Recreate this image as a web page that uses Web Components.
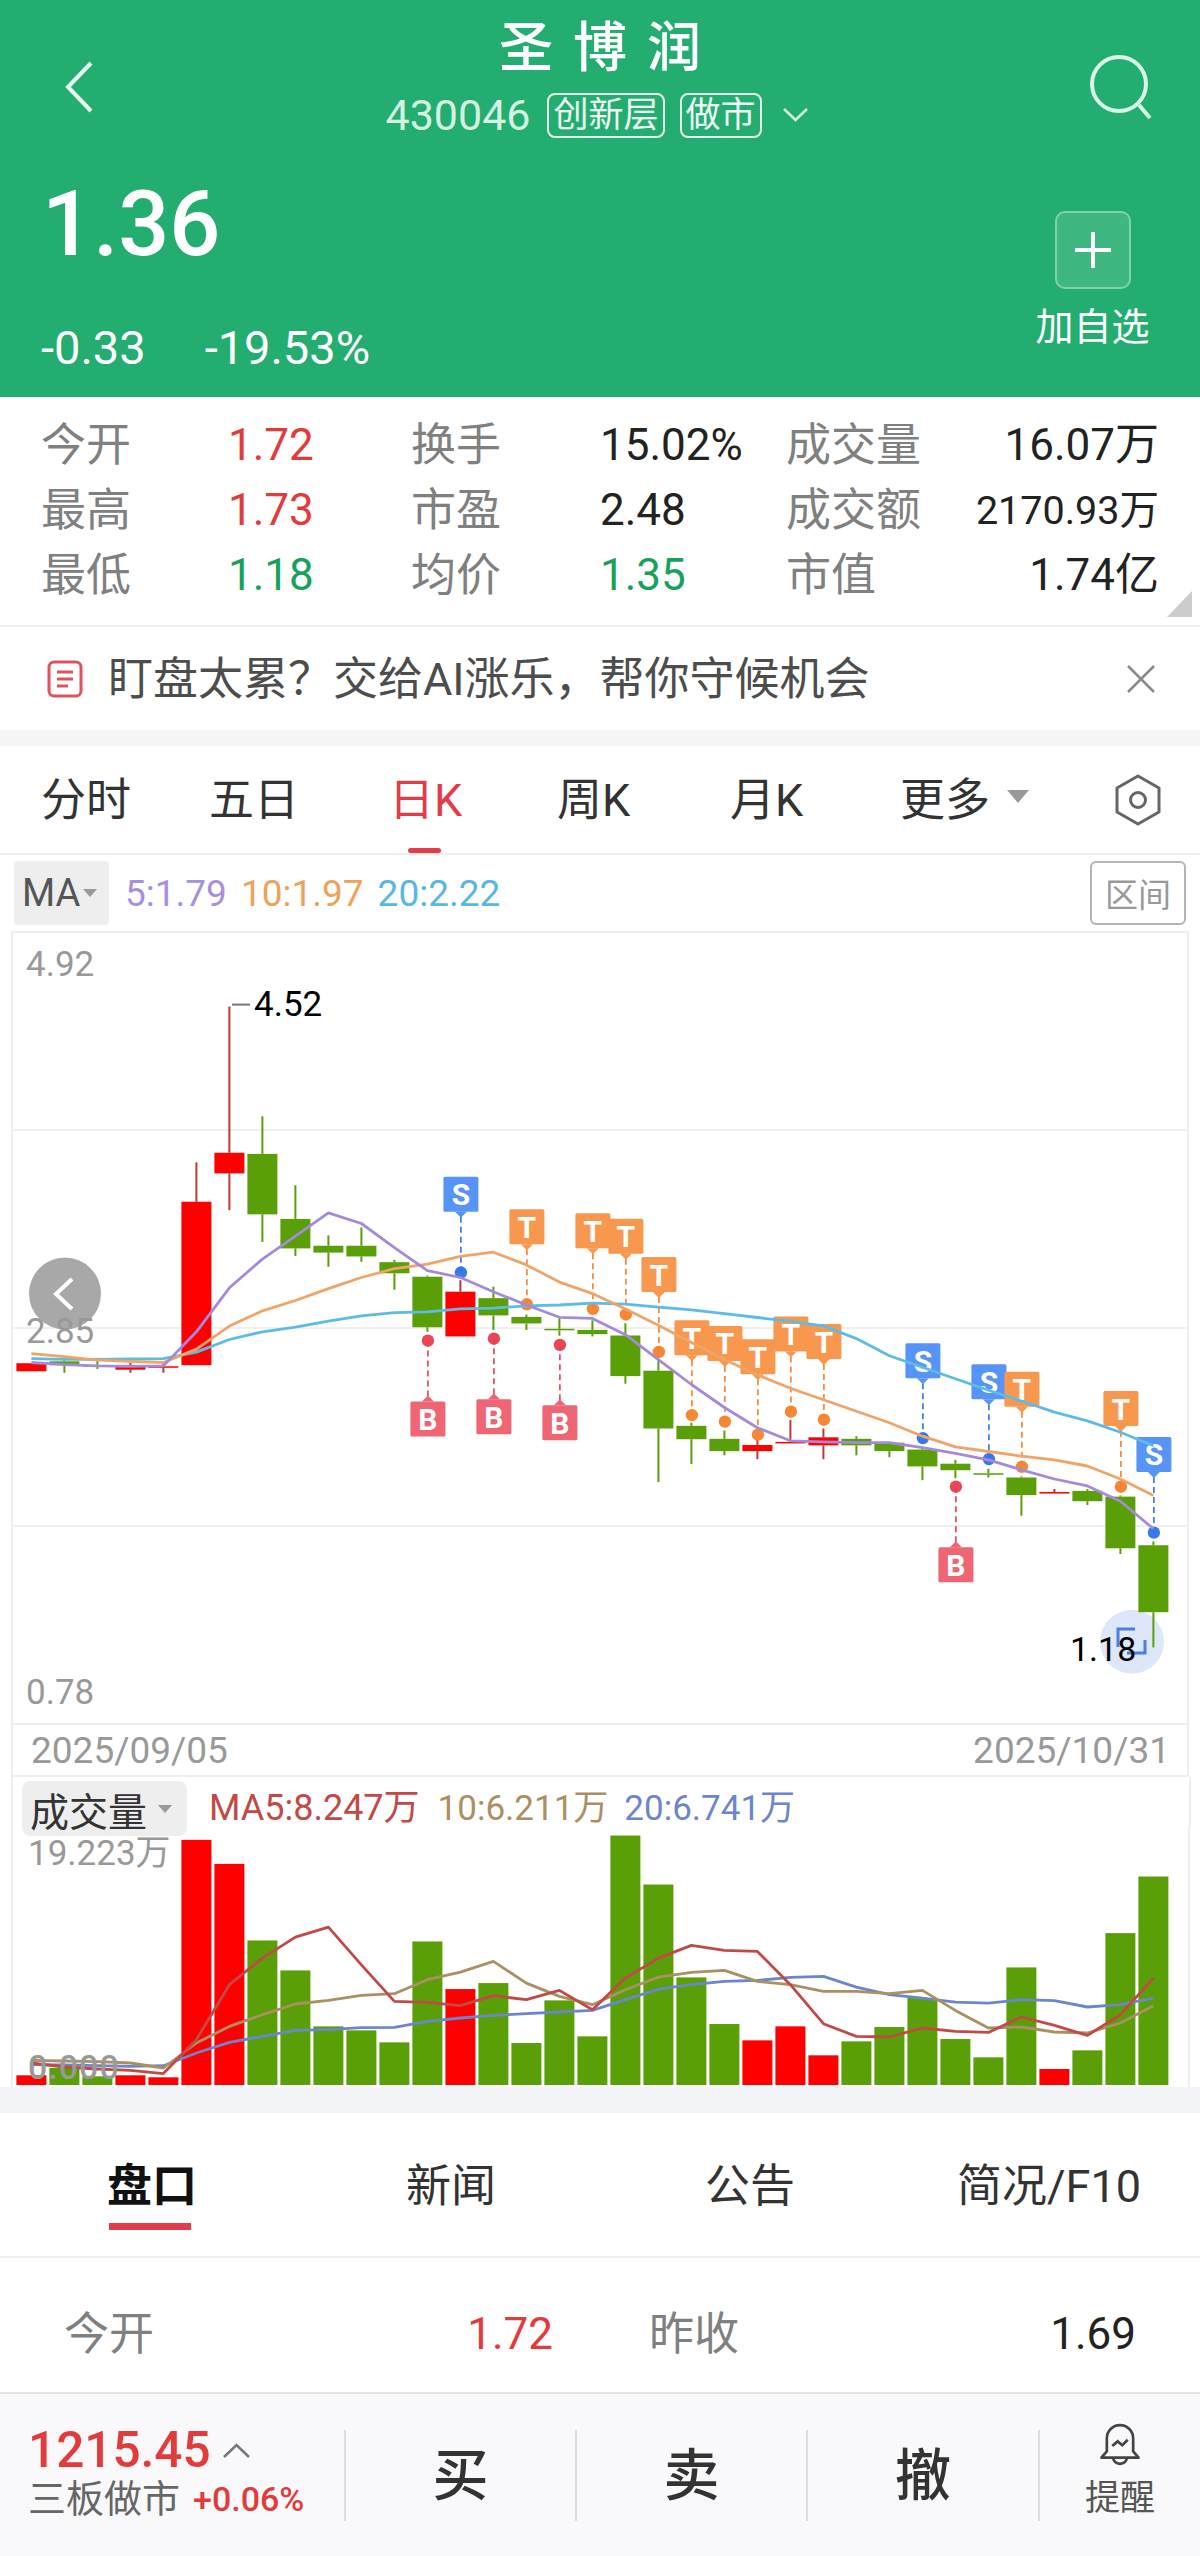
<!DOCTYPE html>
<html lang="zh">
<head>
<meta charset="utf-8">
<title>圣博润</title>
<style>
  html, body { margin: 0; background: #fff; }
  body { width: 1200px; height: 2556px; overflow: hidden; font-family: Roboto, "Noto Sans CJK SC", sans-serif; }
</style>
</head>
<body>
<stock-header></stock-header>
<stock-stats>
  <stat-item label="今开" value="1.72" tone="up"></stat-item>
  <stat-item label="换手" value="15.02%"></stat-item>
  <stat-item label="成交量" value="16.07万" end></stat-item>
  <stat-item label="最高" value="1.73" tone="up"></stat-item>
  <stat-item label="市盈" value="2.48"></stat-item>
  <stat-item label="成交额" value="2170.93万" end small></stat-item>
  <stat-item label="最低" value="1.18" tone="down"></stat-item>
  <stat-item label="均价" value="1.35" tone="down"></stat-item>
  <stat-item label="市值" value="1.74亿" end></stat-item>
</stock-stats>
<promo-bar>盯盘太累？交给AI涨乐，帮你守候机会</promo-bar>
<period-tabs></period-tabs>
<ma-legend></ma-legend>
<kline-chart></kline-chart>
<date-axis></date-axis>
<volume-chart></volume-chart>
<detail-tabs></detail-tabs>
<quote-row>
  <stat-item label="今开" value="1.72" tone="up" spread></stat-item>
  <stat-item label="昨收" value="1.69" spread></stat-item>
</quote-row>
<bottom-bar></bottom-bar>

<script>
// k线数据: 颜色, 实体上, 实体下, 上影, 下影 (前18根和后17根是分开量的)
const y3 = v => 930 + v / 2.613;
const y4 = v => 1130 + v / 2.613;
const cx = i => 31.4 + 33 * i;

const candles = [
  ['r', 1132, 1153], ['g', 1127, 1137, 1120, 1157], ['g', 1137, 1139, 1118, 1147], ['r', 1140, 1149, 1130, 1157],
  ['r', 1140, 1143, 1130, 1157], ['r', 710, 1137, 607], ['r', 582, 636, 200, 732], ['g', 585, 743, 487, 815],
  ['g', 755, 832, 667, 852], ['g', 825, 843, 798, 880], ['g', 825, 853, 777, 867], ['g', 868, 897, 862, 940],
  ['g', 906, 1038, 903, 1050], ['r', 945, 1062, 915], ['g', 962, 1007, 932, 1045], ['g', 1011, 1028, 1005, 1045],
  ['g', 1042, 1046, 1015, 1060], ['g', 1045, 1056, 1020, 1062]
].map(c => [c[0], y3(c[1]), y3(c[2]), c[3] ? y3(c[3]) : 0, c[4] ? y3(c[4]) : 0]).concat([
  ['g', 537, 643, 505, 663], ['g', 629, 780, 600, 920], ['g', 773, 808, 765, 873], ['g', 807, 839, 785, 850],
  ['r', 823, 839, 810, 860], ['r', 815, 819, 758], ['r', 803, 824, 780, 860], ['g', 807, 824, 800, 850],
  ['g', 817, 839, 815, 855], ['g', 835, 879, 830, 915], ['g', 872, 889, 862, 910], ['g', 897, 900, 885, 908],
  ['g', 908, 954, 905, 1008], ['r', 946, 950, 938], ['g', 943, 970, 938, 980], ['g', 958, 1093, 955, 1108],
  ['g', 1085, 1260, 1075, 1352]
].map(c => [c[0], y4(c[1]), y4(c[2]), c[3] ? y4(c[3]) : 0, c[4] ? y4(c[4]) : 0]));

const joinY = (a, b) => a.map(y3).concat(b.map(y4));
const priceMA = {
  '#a58ad9': joinY([1130, 1136, 1139, 1140, 1139, 1050, 935, 860, 800, 739, 767, 830, 890, 908, 945, 980, 1012, 1015],
    [535, 600, 665, 725, 778, 812, 815, 817, 817, 830, 845, 862, 888, 912, 930, 970, 1042]),
  '#f0a468': joinY([1107, 1115, 1124, 1127, 1130, 1095, 1035, 995, 968, 937, 908, 885, 873, 853, 842, 875, 920, 950],
    [468, 510, 555, 600, 640, 675, 705, 735, 765, 800, 828, 840, 852, 862, 878, 912, 955]),
  '#5cbce6': joinY([1120, 1122, 1122, 1121, 1120, 1103, 1070, 1050, 1038, 1022, 1008, 1000, 998, 990, 988, 982, 980, 975],
    [455, 463, 470, 480, 490, 500, 512, 545, 590, 620, 650, 680, 708, 737, 760, 790, 825])
};

// 买卖点: 类型, 第几根, 旗子上沿, 圆点
const marks = [
  ['S', 13, y3(645), y3(895)], ['T', 15, y3(730), y3(978)], ['T', 17, y3(740), y3(990)],
  ['B', 12, y3(1232), y3(1073)], ['B', 14, y3(1226), y3(1068)], ['B', 16, y3(1242), y3(1084)],
  ['T', 18, y4(232), y4(482)], ['T', 19, y4(332), y4(580)], ['T', 20, y4(497), y4(745)],
  ['T', 21, y4(512), y4(762)], ['T', 23, y4(487), y4(736)], ['T', 24, y4(507), y4(757)],
  ['T', 22, y4(547), y4(796)], ['S', 27, y4(557), y4(805)], ['S', 29, y4(612), y4(860)],
  ['T', 30, y4(632), y4(880)], ['B', 28, y4(1090), y4(932)], ['T', 33, y4(682), y4(932)],
  ['S', 34, y4(802), y4(1052)]
];
const markColor = {
  S: ['#5794f7', '#2e72e8'],
  T: ['#f8984e', '#f5822a'],
  B: ['#ee6673', '#e63e4d']
};

const y5 = v => 1720 + v / 3.003;
const volumes = [
  ['r', 1067], ['g', 1045], ['g', 1070], ['r', 1067], ['r', 1073], ['r', 360], ['r', 432], ['g', 662], ['g', 752],
  ['g', 920], ['g', 932], ['g', 968], ['g', 665], ['r', 808], ['g', 790], ['g', 970], ['g', 842], ['g', 950],
  ['g', 347], ['g', 494], ['g', 773], ['g', 913], ['r', 962], ['r', 920], ['r', 1007], ['g', 965], ['g', 922],
  ['g', 835], ['g', 958], ['g', 1013], ['g', 743], ['r', 1048], ['g', 992], ['g', 640], ['g', 470]
];
const volumeMA = {
  '#6b86cc': [1035, 1036, 1038, 1040, 1038, 1000, 968, 950, 932, 930, 924, 923, 905, 895, 887, 882, 877, 872,
    840, 808, 795, 785, 782, 773, 770, 802, 825, 835, 847, 850, 840, 843, 862, 855, 835],
  '#ab9063': [1022, 1024, 1026, 1030, 1045, 970, 920, 885, 853, 842, 827, 822, 780, 757, 725, 790, 830, 855,
    810, 772, 758, 752, 785, 795, 815, 815, 822, 812, 872, 925, 922, 937, 940, 910, 858],
  '#c14a47': [1030, 1042, 1048, 1052, 1062, 960, 795, 715, 652, 622, 735, 845, 848, 858, 828, 840, 812, 870,
    775, 715, 677, 692, 695, 795, 912, 950, 952, 925, 935, 938, 892, 917, 947, 885, 775]
};

const FILL = { r: '#ff0000', g: '#5a9e08' };
const WICK = { r: '#b93a3a', g: '#5a9e08' };

function polyline(ys, color, width) {
  const pts = ys.map((y, i) => cx(i).toFixed(1) + ',' + y.toFixed(1)).join(' ');
  return `<polyline points="${pts}" fill="none" stroke="${color}" stroke-width="${width}" stroke-linejoin="round"/>`;
}

class StockHeader extends HTMLElement {
  constructor() {
    super();
    this.attachShadow({ mode: 'open' });
    this.shadowRoot.innerHTML = `
      <style>
        :host { display: block; height: 397px; background: #24ad70; color: #fff; overflow: hidden; }
        .top { display: grid; grid-template-columns: 1fr auto 1fr; padding-top: 18px; }
        .back { margin: 43px 0 0 65px; display: block; }
        .search { margin: 37px 45px 0 auto; display: block; }
        .mid { display: flex; flex-direction: column; align-items: center; }
        h1 { margin: 0; padding-left: 20px; font-size: 54px; line-height: 62px; letter-spacing: 20px; font-weight: 500; }
        .code { display: flex; align-items: center; height: 46px; margin: 12px 7px 0 0; color: #d3f2e2; }
        .num { font-size: 43px; margin-right: 17px; }
        .tag { font-size: 35px; line-height: 41px; padding: 0 4px; border: 2px solid #e6f7ee; border-radius: 8px; margin-right: 15px; color: #eefaf4; }
        .code svg { margin-left: 6px; }
        .bottom { display: flex; justify-content: space-between; margin-top: 41px; }
        .price { margin-left: 42px; font-size: 90px; line-height: 92px; font-weight: 500; }
        .chg { display: flex; gap: 59px; margin: 54px 0 0 41px; font-size: 47px; line-height: 46px; }
        .add { width: 115px; margin: 32px 50px 0 0; display: flex; flex-direction: column; align-items: center; }
        .plus { width: 76px; height: 78px; box-sizing: border-box; border: 2px solid rgba(255,255,255,.35); border-radius: 10px; background: rgba(255,255,255,.12); display: flex; align-items: center; justify-content: center; }
        .lbl { margin-top: 16px; font-size: 38px; line-height: 44px; white-space: nowrap; }
      </style>
      <div class="top">
        <svg class="back" width="28" height="52" viewBox="0 0 28 52"><polyline points="26,2 3,26 26,50" fill="none" stroke="#eafaf2" stroke-width="4"/></svg>
        <div class="mid">
          <h1>圣博润</h1>
          <div class="code">
            <span class="num">430046</span>
            <span class="tag">创新层</span>
            <span class="tag">做市</span>
            <svg width="25" height="14" viewBox="0 0 25 14"><polyline points="1,1 12.5,12 24,1" fill="none" stroke="#d3f2e2" stroke-width="2.5"/></svg>
          </div>
        </div>
        <svg class="search" width="66" height="66" viewBox="0 0 66 66"><circle cx="30" cy="29" r="27" fill="none" stroke="#d9f5e7" stroke-width="4"/><line x1="50" y1="50" x2="61" y2="63" stroke="#d9f5e7" stroke-width="4"/></svg>
      </div>
      <div class="bottom">
        <div>
          <div class="price">1.36</div>
          <div class="chg"><span>-0.33</span><span>-19.53%</span></div>
        </div>
        <div class="add">
          <div class="plus"><svg width="42" height="42" viewBox="0 0 42 42"><path d="M21 3V39M3 21H39" stroke="#fff" stroke-width="4"/></svg></div>
          <div class="lbl">加自选</div>
        </div>
      </div>`;
  }
}

class StatItem extends HTMLElement {
  constructor() {
    super();
    this.attachShadow({ mode: 'open' });
  }
  connectedCallback() {
    this.shadowRoot.innerHTML = `
      <style>
        :host { display: contents; }
        :host([spread]) { display: flex; justify-content: space-between; align-items: center; }
        .k { color: #808080; font-size: 45px; line-height: 65px; }
        .v { color: #222; font-size: 44px; line-height: 65px; }
        :host([tone=up]) .v { color: #e23b3b; }
        :host([tone=down]) .v { color: #17a25c; }
        :host([end]) .v { text-align: right; }
        :host([small]) .v { font-size: 39.5px; }
      </style>
      <span class="k">${this.getAttribute('label')}</span>
      <span class="v">${this.getAttribute('value')}</span>`;
  }
}

class StockStats extends HTMLElement {
  constructor() {
    super();
    this.attachShadow({ mode: 'open' });
    this.shadowRoot.innerHTML = `
      <style>
        :host { display: block; height: 228px; border-bottom: 2px solid #f0f0f0; position: relative; }
        .grid { display: grid; grid-template-columns: 187px 183px 189px 186px 135px 238px; padding: 16px 0 0 41px; }
        .corner { position: absolute; right: 8px; bottom: 8px; width: 0; height: 0; border-left: 25px solid transparent; border-bottom: 26px solid #ccc; }
      </style>
      <div class="grid"><slot></slot></div>
      <div class="corner"></div>`;
  }
}

class PromoBar extends HTMLElement {
  constructor() {
    super();
    this.attachShadow({ mode: 'open' });
    this.shadowRoot.innerHTML = `
      <style>
        :host { display: flex; align-items: center; box-sizing: border-box; height: 119px; padding: 0 44px 0 47px; border-bottom: 16px solid #f5f5f7; color: #4d4d4d; font-size: 45px; }
        .t { margin-left: 25px; flex: 1; white-space: nowrap; position: relative; top: -3px; }
      </style>
      <svg width="36" height="38" viewBox="0 0 36 38"><rect x="2" y="2" width="32" height="34" rx="5" fill="none" stroke="#e0525e" stroke-width="3"/><path d="M10 12H26M10 19H26M10 26H21" stroke="#e0525e" stroke-width="3"/></svg>
      <div class="t"><slot></slot></div>
      <svg width="30" height="30" viewBox="0 0 30 30"><path d="M2 2L28 28M28 2L2 28" stroke="#8a8a8a" stroke-width="2.5"/></svg>`;
  }
}

class PeriodTabs extends HTMLElement {
  constructor() {
    super();
    this.attachShadow({ mode: 'open' });
    this.shadowRoot.innerHTML = `
      <style>
        :host { display: block; box-sizing: border-box; height: 109px; border-bottom: 2px solid #eee; }
        .row { display: grid; grid-template-columns: 168px 180px 168px 173px 170px 215px 46px; padding-left: 41px; height: 107px; align-items: center; font-size: 45px; color: #333; }
        .row > span { position: relative; top: -3px; }
        .row > span.on { top: 0; align-self: stretch; }
        .on { color: #e23b4a; display: flex; align-items: center; }
        .on b { font-weight: 400; position: relative; top: -3px; }
        .on::after { content: ""; position: absolute; left: 19px; bottom: 0; width: 33px; height: 5px; border-radius: 3px; background: #e23b4a; }
        .more { display: flex; align-items: center; gap: 17px; }
        .more i { width: 0; height: 0; border-left: 11px solid transparent; border-right: 11px solid transparent; border-top: 13px solid #999; }
        svg { display: block; }
      </style>
      <div class="row">
        <span>分时</span><span>五日</span><span class="on"><b>日K</b></span><span>周K</span><span>月K</span>
        <span class="more">更多<i></i></span>
        <svg width="46" height="52" viewBox="0 0 46 52"><path d="M23 2L44 14V38L23 50L2 38V14Z" fill="none" stroke="#666" stroke-width="3" stroke-linejoin="round"/><circle cx="23" cy="26" r="7.5" fill="none" stroke="#666" stroke-width="3"/></svg>
      </div>`;
  }
}

class MaLegend extends HTMLElement {
  constructor() {
    super();
    this.attachShadow({ mode: 'open' });
    this.shadowRoot.innerHTML = `
      <style>
        :host { display: flex; align-items: center; height: 76px; padding: 0 14px; box-sizing: border-box; font-size: 37px; }
        .ma { width: 95px; height: 64px; box-sizing: border-box; background: #eee; border-radius: 4px; display: flex; align-items: center; padding-left: 8px; gap: 3px; color: #555; font-size: 38px; margin-right: 16px; }
        .ma i { width: 0; height: 0; border-left: 7px solid transparent; border-right: 7px solid transparent; border-top: 8px solid #999; }
        span { white-space: nowrap; margin-right: 14px; }
        .zone { margin-left: auto; width: 96px; height: 64px; box-sizing: border-box; border: 2px solid #b4b4b4; border-radius: 6px; color: #999; font-size: 33px; display: flex; align-items: center; justify-content: center; }
      </style>
      <div class="ma">MA<i></i></div>
      <span style="color:#a98fe0">5:1.79</span>
      <span style="color:#eea25c">10:1.97</span>
      <span style="color:#57b8e4">20:2.22</span>
      <div class="zone">区间</div>`;
  }
}

class KlineChart extends HTMLElement {
  constructor() {
    super();
    this.attachShadow({ mode: 'open' });
    this.shadowRoot.innerHTML = `
      <style>
        :host { display: block; height: 794px; }
        svg { display: block; }
        text { font-family: Roboto, sans-serif; dominant-baseline: central; }
      </style>
      <svg width="1200" height="794" viewBox="0 931 1200 794">${this.draw()}</svg>`;
  }
  candleSvg() {
    return candles.map((c, i) => {
      const x = cx(i);
      const [col, top, bot, hi, lo] = c;
      let s = '';
      if (hi) s += `<line x1="${x}" x2="${x}" y1="${hi}" y2="${top}" stroke="${WICK[col]}" stroke-width="2"/>`;
      if (lo) s += `<line x1="${x}" x2="${x}" y1="${bot}" y2="${lo}" stroke="${WICK[col]}" stroke-width="2"/>`;
      return s + `<rect x="${x - 15}" y="${top}" width="30" height="${Math.max(bot - top, 1.5)}" fill="${FILL[col]}"/>`;
    }).join('');
  }
  markSvg() {
    let dash = '', flags = '', dots = '';
    for (const [t, i, top, dot] of marks) {
      const x = cx(i) + 0.5;
      const [c, d] = markColor[t];
      const up = t === 'B';
      const y1 = up ? top - 5 : top + 40;
      dash += `<line x1="${x}" x2="${x}" y1="${y1}" y2="${dot}" stroke="${d}" stroke-width="1.6" stroke-dasharray="6 4"/>`;
      const tip = up ? `M${x - 6} ${top}L${x} ${top - 6}L${x + 6} ${top}Z` : `M${x - 6} ${top + 35}L${x} ${top + 41}L${x + 6} ${top + 35}Z`;
      flags += `<rect x="${x - 17.5}" y="${top}" width="35" height="35" rx="1.5" fill="${c}"/><path d="${tip}" fill="${c}"/>`
        + `<text x="${x}" y="${top + 18}" text-anchor="middle" fill="#fff" font-size="30" font-weight="700">${t}</text>`;
      dots += `<circle cx="${x}" cy="${dot}" r="6.2" fill="${d}" fill-opacity=".95"/>`;
    }
    return dash + flags + dots;
  }
  draw() {
    const frame = [1130, 1328, 1526].map(y => `<line x1="11" x2="1189" y1="${y}" y2="${y}" stroke="#f0f0f0" stroke-width="2"/>`).join('');
    const lines = Object.entries(priceMA).reverse().map(([c, ys]) => polyline(ys, c, 2.8)).join('');
    const last = `<circle cx="1132" cy="1641.7" r="32" fill="#dde7f9"/>`;
    const icon = `<path d="M1135 1629H1118V1647" fill="none" stroke="#4a7fe0" stroke-width="3"/><path d="M1127 1653H1145V1640" fill="none" stroke="#4a7fe0" stroke-width="3"/>`;
    return `<rect x="12" y="932" width="1176" height="792" fill="#fff" stroke="#eee" stroke-width="2"/>`
      + frame + last + this.candleSvg() + this.markSvg() + lines + icon
      + `<circle cx="65" cy="1293.6" r="36" fill="#a8a8a8"/>`
      + `<polyline points="72,1279 56,1294 72,1309" fill="none" stroke="#fff" stroke-width="4"/>`
      + `<line x1="232" x2="250" y1="1004.6" y2="1004.6" stroke="#777" stroke-width="2"/>`
      + `<text x="254" y="1004" font-size="35" fill="#000">4.52</text>`
      + `<text x="1070" y="1649" font-size="34" fill="#000">1.18</text>`
      + `<text x="26" y="964" font-size="35" fill="#999">4.92</text>`
      + `<text x="26" y="1331" font-size="35" fill="#999">2.85</text>`
      + `<text x="26" y="1692" font-size="35" fill="#999">0.78</text>`;
  }
}

class DateAxis extends HTMLElement {
  constructor() {
    super();
    this.attachShadow({ mode: 'open' });
    this.shadowRoot.innerHTML = `
      <style>
        :host { display: flex; justify-content: space-between; align-items: center; height: 50px; margin: 0 11px; padding: 0 17px 0 18px; border-left: 2px solid #eee; border-right: 2px solid #eee; border-bottom: 2px solid #eee; color: #999; font-size: 37px; }
      </style>
      <span>2025/09/05</span><span>2025/10/31</span>`;
  }
}

class VolumeChart extends HTMLElement {
  constructor() {
    super();
    this.attachShadow({ mode: 'open' });
    const bars = volumes.map(([c, v], i) => `<rect x="${cx(i) - 15}" y="${y5(v)}" width="30" height="${2085 - y5(v)}" fill="${FILL[c]}"/>`).join('');
    const lines = Object.entries(volumeMA).map(([c, vs]) => polyline(vs.map(y5), c, 2.8)).join('');
    this.shadowRoot.innerHTML = `
      <style>
        :host { display: block; box-sizing: border-box; height: 336px; border-bottom: 26px solid #f3f4f8; }
        .head { display: flex; align-items: flex-start; height: 50px; padding: 4px 0 0 9px; box-sizing: border-box; font-size: 35px; border-left: 2px solid #eee; margin: 0 9px 0 11px; border-right: 2px solid #eee; }
        .chip { width: 165px; height: 55px; flex: none; box-sizing: border-box; background: #eee; border-radius: 8px; display: flex; align-items: center; padding-left: 8px; color: #333; font-size: 39px; margin-right: 22px; white-space: nowrap; }
        .chip i { margin-left: 11px; width: 0; height: 0; border-left: 7px solid transparent; border-right: 7px solid transparent; border-top: 8px solid #999; }
        .head span { line-height: 55px; white-space: nowrap; margin-right: 18px; }
        .head .ma5 { font-size: 36px; }
        .head .ma10 { margin-right: 16px; }
        svg { display: block; }
        text { font-family: Roboto, "Noto Sans CJK SC", sans-serif; dominant-baseline: central; }
      </style>
      <div class="head">
        <div class="chip">成交量<i></i></div>
        <span class="ma5" style="color:#c14a47">MA5:8.247万</span>
        <span class="ma10" style="color:#ab9063">10:6.211万</span>
        <span style="color:#6b86cc">20:6.741万</span>
      </div>
      <svg width="1200" height="260" viewBox="0 1827 1200 260">
        <line x1="12" x2="12" y1="1827" y2="2087" stroke="#eee" stroke-width="2"/>
        <line x1="1189" x2="1189" y1="1827" y2="2087" stroke="#eee" stroke-width="2"/>
        ${bars}${lines}
        <text x="28" y="1853" font-size="35" fill="#999">19.223万</text>
        <text x="28" y="2067" font-size="34" font-weight="500" letter-spacing="1" fill="#999">0.000</text>
      </svg>`;
  }
}

class DetailTabs extends HTMLElement {
  constructor() {
    super();
    this.attachShadow({ mode: 'open' });
    this.shadowRoot.innerHTML = `
      <style>
        :host { display: block; height: 145px; box-sizing: border-box; border-bottom: 2px solid #f0f0f0; }
        .row { display: grid; grid-template-columns: 299px 299px 252px 1fr; padding-left: 107px; padding-top: 47px; font-size: 45px; line-height: 54px; color: #333; }
        .on { color: #111; font-weight: 700; position: relative; }
        .on::after { content: ""; position: absolute; left: 2px; top: 63px; width: 82px; height: 7px; background: #e23b4a; }
      </style>
      <div class="row"><span class="on">盘口</span><span>新闻</span><span>公告</span><span>简况/F10</span></div>`;
  }
}

class QuoteRow extends HTMLElement {
  constructor() {
    super();
    this.attachShadow({ mode: 'open' });
    this.shadowRoot.innerHTML = `
      <style>
        :host { display: block; height: 136px; box-sizing: border-box; border-bottom: 2px solid #e4e4e4; }
        .row { display: grid; grid-template-columns: 489px 487px; column-gap: 96px; padding: 44px 0 0 64px; }
      </style>
      <div class="row"><slot></slot></div>`;
  }
}

class BottomBar extends HTMLElement {
  constructor() {
    super();
    this.attachShadow({ mode: 'open' });
    this.shadowRoot.innerHTML = `
      <style>
        :host { display: flex; height: 162px; background: #f9f9fb; align-items: flex-start; box-sizing: border-box; padding-top: 36px; }
        .idx { width: 344px; box-sizing: border-box; padding-left: 28px; }
        .l1 { display: flex; align-items: center; color: #e23b3b; font-size: 49.5px; line-height: 48px; font-weight: 500; margin-top: -4px; }
        .l1 svg { margin-left: 12px; }
        .l2 { display: flex; align-items: center; margin-top: 0; line-height: 50px; color: #666; font-size: 38px; }
        .l2 b { margin-left: 13px; color: #e23b3b; font-size: 34px; font-weight: 500; }
        .btn { height: 91px; box-sizing: border-box; border-left: 2px solid #ddd; display: flex; align-items: center; justify-content: center; font-size: 56px; font-weight: 500; color: #333; }
        .btn span { position: relative; top: -5px; }
        .bell { flex: 1; height: 91px; border-left: 2px solid #ddd; display: flex; flex-direction: column; align-items: center; color: #555; font-size: 35px; }
        .bell svg { margin-top: -8px; display: block; }
        .bell span { line-height: 44px; margin-top: 7px; }
      </style>
      <div class="idx">
        <div class="l1">1215.45<svg width="27" height="15" viewBox="0 0 27 15"><polyline points="1,14 13.5,2 26,14" fill="none" stroke="#777" stroke-width="2.5"/></svg></div>
        <div class="l2">三板做市<b>+0.06%</b></div>
      </div>
      <div class="btn" style="width:231px"><span>买</span></div>
      <div class="btn" style="width:231px"><span>卖</span></div>
      <div class="btn" style="width:232px"><span>撤</span></div>
      <div class="bell">
        <svg width="60" height="62" viewBox="0 0 60 62"><path d="M13 38V21A17 17 0 0 1 47 21V38L54 46H6Z" fill="none" stroke="#444" stroke-width="3.5" stroke-linejoin="round"/><path d="M21 46A9 8 0 0 0 39 46" fill="none" stroke="#444" stroke-width="3.5"/><polyline points="20,31 27,25 33,30 40,23" fill="none" stroke="#444" stroke-width="3.5"/></svg>
        <span>提醒</span>
      </div>`;
  }
}

customElements.define('stock-header', StockHeader);
customElements.define('stat-item', StatItem);
customElements.define('stock-stats', StockStats);
customElements.define('promo-bar', PromoBar);
customElements.define('period-tabs', PeriodTabs);
customElements.define('ma-legend', MaLegend);
customElements.define('kline-chart', KlineChart);
customElements.define('date-axis', DateAxis);
customElements.define('volume-chart', VolumeChart);
customElements.define('detail-tabs', DetailTabs);
customElements.define('quote-row', QuoteRow);
customElements.define('bottom-bar', BottomBar);
</script>
</body>
</html>
